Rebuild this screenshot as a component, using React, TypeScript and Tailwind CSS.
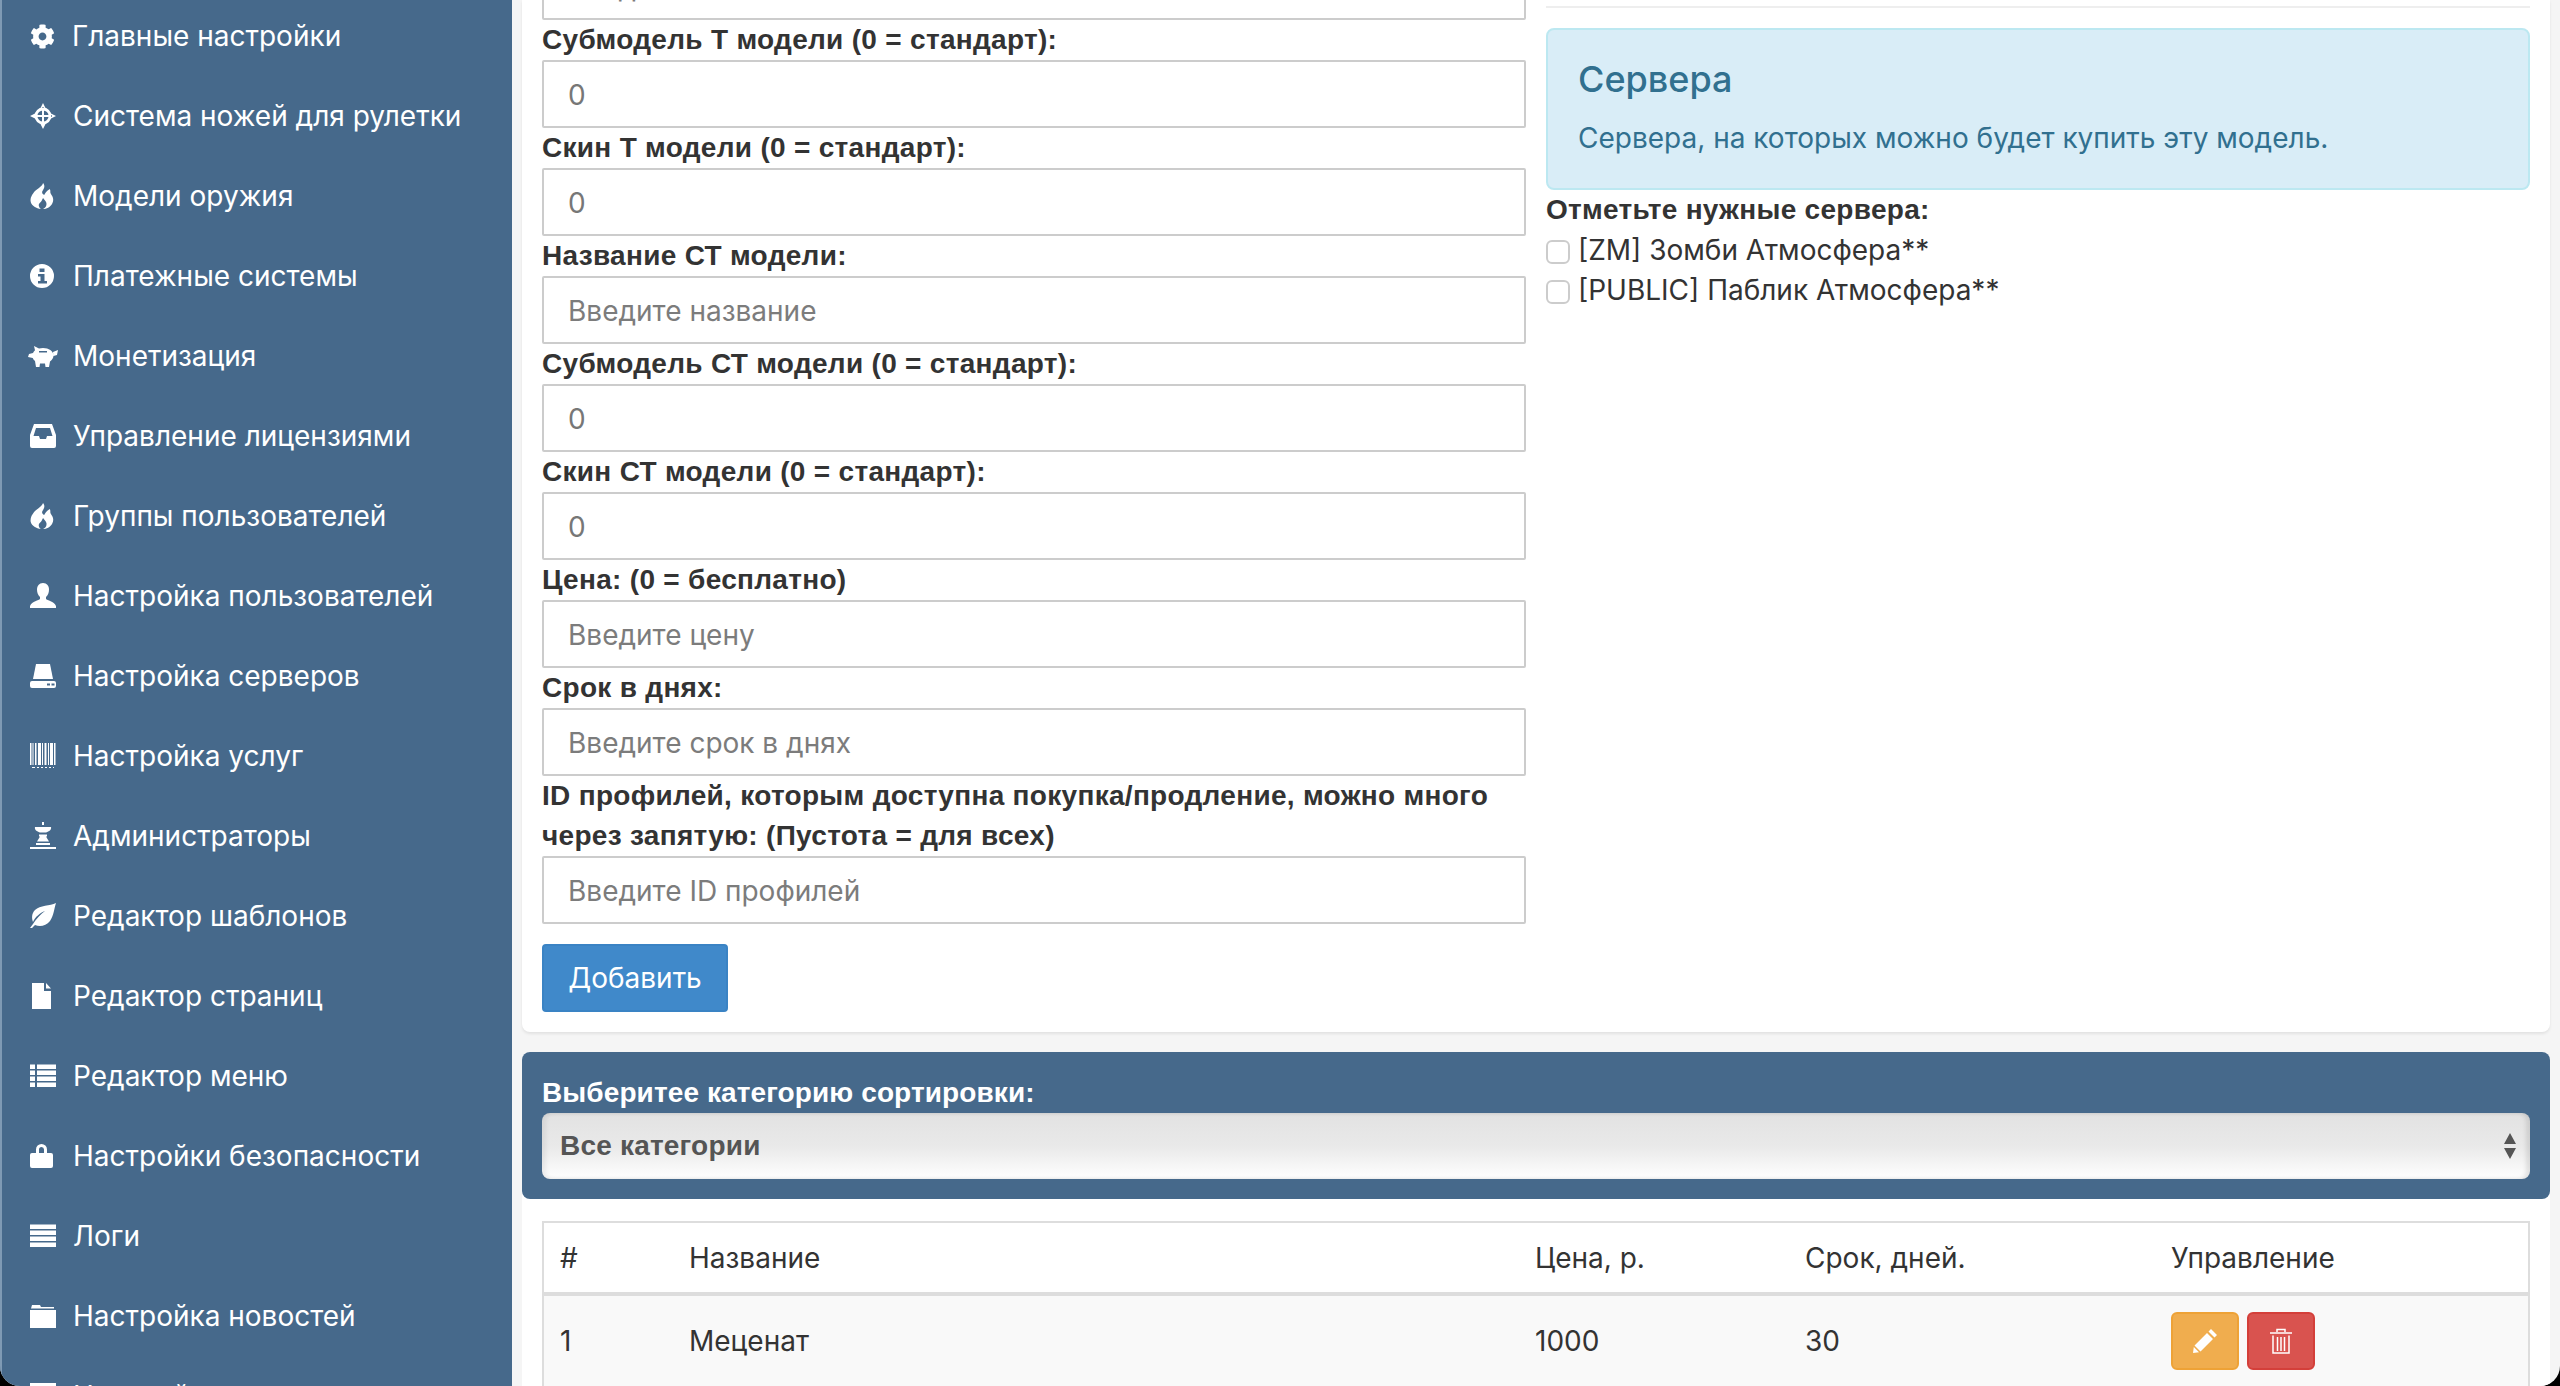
import { FaCog } from "react-icons/fa";

const Glyph = ({ children }: { children: React.ReactNode }) => (
  <svg
    viewBox="0 0 26 26"
    className="h-[26px] w-[26px] shrink-0 overflow-visible fill-white"
  >
    {children}
  </svg>
);

const fire =
  "M13 0c2 3 1 5 0 7-1.500 2-1 4 1 5 1-2 2-4 5-6 1 2 0 3 1 5 2 3 3 6 1 10-1.500 3-5 5-8 5 2-1 3.500-3 3-6-.3-2-2-3-3-5-1 2-1 3-3 5-1.500 1.500-1 4 1 6-4-.5-8-3-9-7-.7-4 1-7 3-10 2-3 7-5 8-9z";

const menu: { title: string; icon: React.ReactNode }[] = [
  { title: "Главные настройки", icon: <FaCog className="h-[25px] w-[25px] shrink-0 text-white" /> },
  {
    title: "Система ножей для рулетки",
    icon: (
      <Glyph>
        <circle cx="13" cy="13" r="7" fill="none" stroke="#fff" strokeWidth="2.800" />
        <path d="M0 13l6-3v6zM26 13l-6-3v6zM13 0l-3 6h6zM13 26l-3-6h6zM12 4h2v18h-2zM4 12h18v2H4z" />
      </Glyph>
    ),
  },
  {
    title: "Модели оружия",
    icon: (
      <Glyph>
        <path d={fire} transform="translate(-1.500 0) scale(1.120 1)" />
      </Glyph>
    ),
  },
  {
    title: "Платежные системы",
    icon: (
      <Glyph>
        <path
          fillRule="evenodd"
          d="M12 1a12 12 0 1 1 0 24 12 12 0 0 1 0-24zM9.500 5.500v3.500h5V5.500zM8 11v2.500h2.500V18H8v2.500h9V18h-2.500v-7z"
        />
      </Glyph>
    ),
  },
  {
    title: "Монетизация",
    icon: (
      <Glyph>
        <path
          fillRule="evenodd"
          d="M13 5c6 0 10 3 10.500 7 .2 3-1.500 5-3.500 6.500l-1 5.500h-3.500l-.5-3.500h-5L9.500 24H6l-1-6c-1-.8-1.800-1.800-2.300-3L-2 14l1-3 4-1c.5-1 1.200-2 2-2.800L4 3l5 2.500c1.200-.3 2.600-.5 4-.5zM9 8v1.500h8V8zM23 9l5-2-1 5-3.500 1z"
        />
      </Glyph>
    ),
  },
  {
    title: "Управление лицензиями",
    icon: (
      <Glyph>
        <path
          fillRule="evenodd"
          d="M4 1h18l4 11v11a2 2 0 0 1-2 2H2a2 2 0 0 1-2-2V12zM6 5L3.500 13H9l1 3h6l1-3h5.500L20 5z"
        />
      </Glyph>
    ),
  },
  {
    title: "Группы пользователей",
    icon: (
      <Glyph>
        <path d={fire} transform="translate(-1.500 0) scale(1.120 1)" />
      </Glyph>
    ),
  },
  {
    title: "Настройка пользователей",
    icon: (
      <Glyph>
        <path d="M13 0c-4 0-6 3-6 6.500 0 3 1 5.500 3 7.500v2c-1 1.500-8 2-10 7v2h26v-2c-2-5-9-5.500-10-7v-2c2-2 3-4.500 3-7.500C19 3 17 0 13 0z" />
      </Glyph>
    ),
  },
  {
    title: "Настройка серверов",
    icon: (
      <Glyph>
        <path d="M6 1h14l3 15H3z" />
        <path
          fillRule="evenodd"
          d="M2 18h22a2 2 0 0 1 2 2v3a2 2 0 0 1-2 2H2a2 2 0 0 1-2-2v-3a2 2 0 0 1 2-2zM17 20.500v2h3v-2zM21.500 20.500v2h3v-2z"
        />
      </Glyph>
    ),
  },
  {
    title: "Настройка услуг",
    icon: (
      <Glyph>
        <path d="M0 0h1.500v22H0zM2.500 0h1v22h-1zM5 0h1.500v22H5zM8 0h3v22H8zM12 0h1v22h-1zM14.500 0h2v22h-2zM18 0h1v22h-1zM20 0h3v22h-3zM24 0h1v22h-1zM25.500 0h.5v22h-.5zM2 24h3v1H2zM7 24h2v1H7zM11 24h2v1h-2zM15 24h2v1h-2zM19 24h2v1h-2zM23 24h1v1h-1z" />
      </Glyph>
    ),
  },
  {
    title: "Администраторы",
    icon: (
      <Glyph>
        <path d="M12 -1h2v3h-2zM5 4h16c1 3-3 5-5 5.500H10C8 9 4 7 5 4zM9 11.500h8v2H9zM10 13.500h6l3 5H7zM6 20h14v2H6zM0 24h26v2H0z" />
      </Glyph>
    ),
  },
  {
    title: "Редактор шаблонов",
    icon: (
      <Glyph>
        <path d="M26 0C20 3 10 2 5 7c-4 4-3 9-2 12C5 14 10 10 15 8c-4 3-9 8-12 13l-3 4h2l3-3c5 2 11 1 15-4 4-6 4-12 6-18z" />
      </Glyph>
    ),
  },
  {
    title: "Редактор страниц",
    icon: (
      <Glyph>
        <path d="M2 0h12v8h7v18H2zM16 0l5 5.500h-5z" />
      </Glyph>
    ),
  },
  {
    title: "Редактор меню",
    icon: (
      <Glyph>
        <path d="M0 1.500h5V6H0zM7 1.500h19V6H7zM0 7.500h5V12H0zM7 7.500h19V12H7zM0 13.500h5V18H0zM7 13.500h19V18H7zM0 19.500h5V24H0zM7 19.500h19V24H7z" />
      </Glyph>
    ),
  },
  {
    title: "Настройки безопасности",
    icon: (
      <Glyph>
        <path d="M2 10h19a2 2 0 0 1 2 2v11a2 2 0 0 1-2 2H2a2 2 0 0 1-2-2V12a2 2 0 0 1 2-2zM6 10V6.500a5.500 5.500 0 0 1 11 0V10h-3V6.500a2.500 2.500 0 0 0-5 0V10z" />
      </Glyph>
    ),
  },
  {
    title: "Логи",
    icon: (
      <Glyph>
        <path d="M0 1.500h26V6H0zM0 7.500h26V12H0zM0 13.500h26V18H0zM0 19.500h26V24H0z" />
      </Glyph>
    ),
  },
  {
    title: "Настройка новостей",
    icon: (
      <Glyph>
        <path d="M2 2h8l1 2h13v1.500H1zM0 7h26v18H0z" />
      </Glyph>
    ),
  },
  {
    title: "Настройка магазина",
    icon: (
      <Glyph>
        <path d="M0 0h26v26H0z" />
      </Glyph>
    ),
  },
];

const fields: { label: React.ReactNode; placeholder?: string; value?: string }[] = [
  { label: "Субмодель Т модели (0 = стандарт):", value: "0" },
  { label: "Скин Т модели (0 = стандарт):", value: "0" },
  { label: "Название СТ модели:", placeholder: "Введите название" },
  { label: "Субмодель СТ модели (0 = стандарт):", value: "0" },
  { label: "Скин СТ модели (0 = стандарт):", value: "0" },
  { label: "Цена: (0 = бесплатно)", placeholder: "Введите цену" },
  { label: "Срок в днях:", placeholder: "Введите срок в днях" },
  {
    label: "ID профилей, которым доступна покупка/продление, можно много через запятую: (Пустота = для всех)",
    placeholder: "Введите ID профилей",
  },
];

const inputClass =
  "block h-[68px] w-full rounded-[2px] border-2 border-[#ccc] bg-white px-[24px] pt-[2px] text-[28px] text-[#777] placeholder:text-[#7c7c7c]";

const labelClass =
  "block font-['Liberation_Sans',sans-serif] font-bold tracking-[0.3px]";

const App = () => {
  return (
    <div className="h-[1386px] w-[2560px] bg-black font-['Inter',sans-serif] text-[28px] leading-[40px] text-[#333]">
      <div className="flex h-full overflow-hidden rounded-b-[20px] bg-[#f5f5f5]">
        <aside className="h-full w-[512px] shrink-0 border-l-2 border-[#7f9ab4] bg-[#46698b] text-white">
          <ul className="-mt-[4px]">
            {menu.map((item) => (
              <li key={item.title} className="flex h-[80px] items-center gap-[17px] pl-[28px]">
                {item.icon}
                <span>{item.title}</span>
              </li>
            ))}
          </ul>
        </aside>

        <main className="ml-[10px] mr-[10px] flex-1">
          <div className="rounded-b-[8px] bg-white px-[20px] pb-[20px] shadow-[0_2px_3px_rgba(0,0,0,0.08)]">
            <div className="grid grid-cols-2 gap-x-[20px]">
              <div>
                <input className={`${inputClass} -mt-[48px]`} placeholder="Введите название" readOnly />
                {fields.map((field, index) => (
                  <div key={index}>
                    <label className={labelClass}>{field.label}</label>
                    <input
                      className={inputClass}
                      placeholder={field.placeholder}
                      defaultValue={field.value}
                    />
                  </div>
                ))}
                <button className="mt-[20px] block h-[68px] w-[186px] rounded-[4px] border-2 border-[#3a83c4] bg-[#4089ca] text-white">
                  Добавить
                </button>
              </div>

              <div>
                <hr className="mt-[6px] border-t-2 border-[#eee]" />
                <div className="mt-[20px] h-[162px] rounded-[8px] border-2 border-[#bce8f1] bg-[#d9edf7] px-[30px] pt-[27px] text-[#31708f]">
                  <h4 className="text-[36px] leading-[44px] font-medium">Сервера</h4>
                  <p className="mt-[17px]">Сервера, на которых можно будет купить эту модель.</p>
                </div>
                <label className={labelClass}>Отметьте нужные сервера:</label>
                <div className="flex items-center gap-[8px]">
                  <input
                    type="checkbox"
                    className="mt-[3px] h-[24px] w-[24px] appearance-none rounded-[6px] border-2 border-[#ccc] bg-white"
                  />
                  <span>[ZM] Зомби Атмосфера**</span>
                </div>
                <div className="flex items-center gap-[8px]">
                  <input
                    type="checkbox"
                    className="mt-[3px] h-[24px] w-[24px] appearance-none rounded-[6px] border-2 border-[#ccc] bg-white"
                  />
                  <span>[PUBLIC] Паблик Атмосфера**</span>
                </div>
              </div>
            </div>
          </div>

          <div className="mt-[20px] rounded-t-[8px] bg-white">
            <div className="rounded-[8px] bg-[#46698b] px-[20px] pt-[21px] pb-[20px]">
              <label className="block font-['Liberation_Sans',sans-serif] font-bold tracking-[0.1px] text-white">
                Выберитее категорию сортировки:
              </label>
              <div className="relative">
                <select className="block h-[66px] w-full appearance-none rounded-[8px] bg-gradient-to-b from-[#e2e2e2] via-[#e9e9e9] to-white px-[18px] font-['Liberation_Sans',sans-serif] font-bold tracking-[0.2px] text-[#555] shadow-[inset_4px_0_4px_rgba(0,0,0,0.06),inset_-4px_0_4px_rgba(0,0,0,0.1)]">
                  <option>Все категории</option>
                </select>
                <svg viewBox="0 0 12 26" className="pointer-events-none absolute top-[20px] right-[14px] h-[26px] w-[12px] fill-[#555]">
                  <path d="M6 0l6 11H0zM0 15h12L6 26z" />
                </svg>
              </div>
            </div>

            <div className="px-[20px] pt-[22px]">
              <table className="w-full table-fixed border-2 border-[#ddd] text-left">
                <thead>
                  <tr className="h-[72px] border-b-4 border-[#ddd]">
                    <th className="w-[130px] pl-[16px] font-normal">#</th>
                    <th className="w-[846px] pl-[16px] font-normal">Название</th>
                    <th className="w-[270px] pl-[16px] font-normal">Цена, р.</th>
                    <th className="w-[366px] pl-[16px] font-normal">Срок, дней.</th>
                    <th className="pl-[16px] font-normal">Управление</th>
                  </tr>
                </thead>
                <tbody>
                  <tr className="bg-[#f9f9f9]">
                    <td className="py-[16px] pl-[16px]">1</td>
                    <td className="pl-[16px]">Меценат</td>
                    <td className="pl-[16px]">1000</td>
                    <td className="pl-[16px]">30</td>
                    <td className="py-[16px] pl-[16px]">
                      <div className="flex gap-[8px]">
                        <button className="flex h-[58px] w-[68px] items-center justify-center rounded-[6px] border-2 border-[#eea236] bg-[#f0ad4e]">
                          <svg viewBox="0 0 24 24" className="h-[24px] w-[24px] fill-white">
                            <path d="M18 0l6 6-2.500 2.500-6-6zM14 4l6 6L7.500 22.500l-6-6zM0 24l.8-6 5.200 5.200z" />
                          </svg>
                        </button>
                        <button className="flex h-[58px] w-[68px] items-center justify-center rounded-[6px] border-2 border-[#d43f3a] bg-[#d9534f]">
                          <svg viewBox="0 0 22 26" className="h-[26px] w-[22px] fill-none stroke-white stroke-[1.5px]">
                            <path d="M7 4V1.500h8V4M0 5h22M3 7.500V25h16V7.500M7.500 9v14M11 9v14M14.500 9v14" />
                          </svg>
                        </button>
                      </div>
                    </td>
                  </tr>
                </tbody>
              </table>
            </div>
          </div>
        </main>
      </div>
    </div>
  );
};
export default App;
